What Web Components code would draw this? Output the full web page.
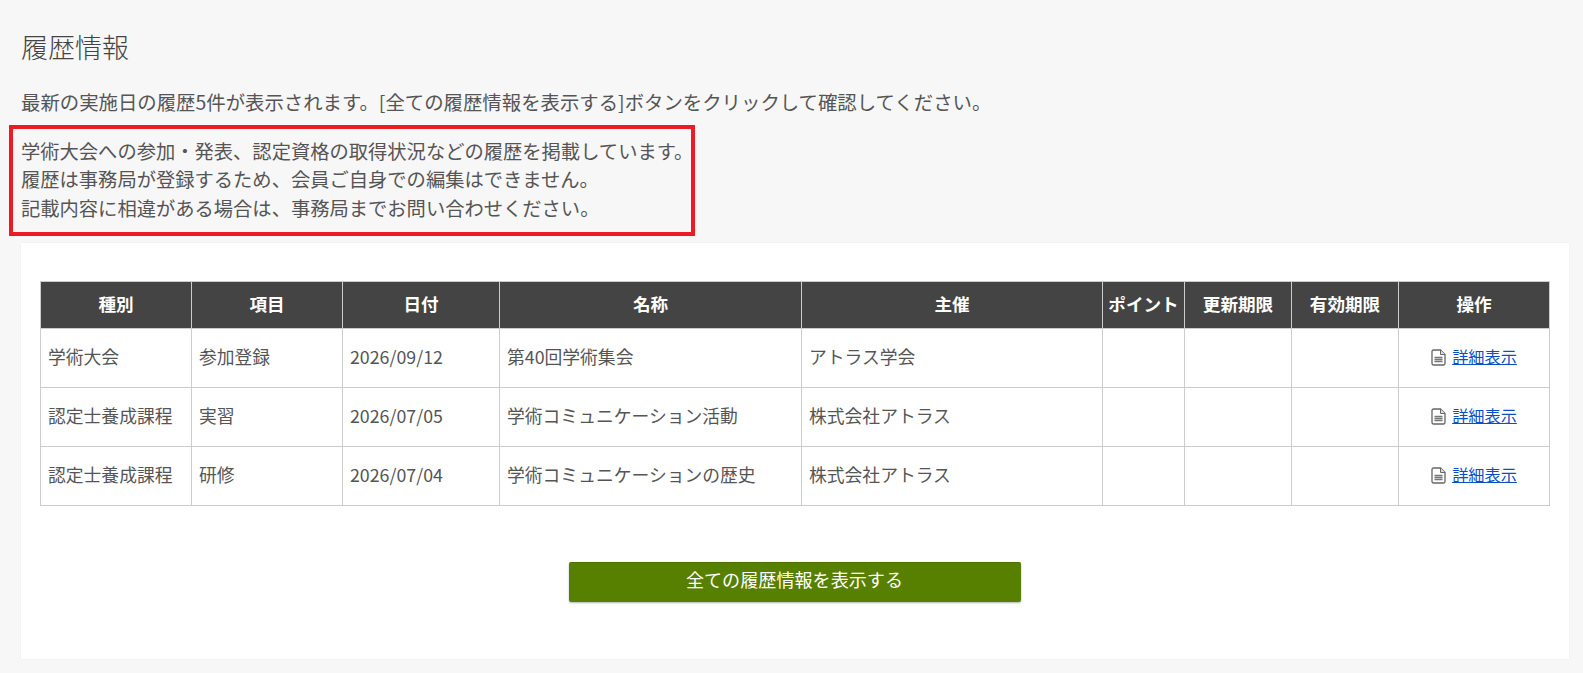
<!DOCTYPE html>
<html lang="ja">
<head>
<meta charset="utf-8">
<title>履歴情報</title>
<style>
  html, body { margin: 0; background: #f7f7f7; }
  body { font-family: "Noto Sans CJK JP", sans-serif; color: #555; overflow: hidden; }
</style>
</head>
<body>
<history-page>
  <span slot="title">履歴情報</span>
  <span slot="lead">最新の実施日の履歴5件が表示されます。[全ての履歴情報を表示する]ボタンをクリックして確認してください。</span>
  <note-box>
    <div>学術大会への参加・発表、認定資格の取得状況などの履歴を掲載しています。</div>
    <div>履歴は事務局が登録するため、会員ご自身での編集はできません。</div>
    <div>記載内容に相違がある場合は、事務局までお問い合わせください。</div>
  </note-box>
  <history-card>
    <history-table></history-table>
    <green-button>全ての履歴情報を表示する</green-button>
  </history-card>
</history-page>
<script>
class HistoryPage extends HTMLElement {
  constructor() {
    super();
    this.attachShadow({ mode: 'open' }).innerHTML = `
      <style>
        :host { display: block; padding: 27px 14px 14px 21px; }
        h1 { margin: 0; font-size: 27px; font-weight: 300; line-height: 40px; color: #444; }
        p { margin: 21px 0 0; font-size: 19.4px; line-height: 28px; font-weight: 400; white-space: nowrap; }
      </style>
      <h1><slot name="title"></slot></h1>
      <p><slot name="lead"></slot></p>
      <slot></slot>`;
  }
}

class NoteBox extends HTMLElement {
  constructor() {
    super();
    this.attachShadow({ mode: 'open' }).innerHTML = `
      <style>
        :host {
          display: block; box-sizing: border-box; width: 686px; height: 111px;
          margin: 9px 0 7px -12px; padding: 8px 7px 0 8px;
          border: 4px solid #ed1c24; font-size: 19.3px; line-height: 28.3px; font-weight: 400;
          white-space: nowrap;
        }
      </style>
      <slot></slot>`;
  }
}

class HistoryCard extends HTMLElement {
  constructor() {
    super();
    this.attachShadow({ mode: 'open' }).innerHTML = `
      <style>
        :host { display: block; background: #fff; padding: 38px 20px 57px 19px; box-shadow: 0 0 2px rgba(0,0,0,.05); }
      </style>
      <slot></slot>`;
  }
}

const rows = [
  ['学術大会', '参加登録', '2026/09/12', '第40回学術集会', 'アトラス学会'],
  ['認定士養成課程', '実習', '2026/07/05', '学術コミュニケーション活動', '株式会社アトラス'],
  ['認定士養成課程', '研修', '2026/07/04', '学術コミュニケーションの歴史', '株式会社アトラス']
];
const docIcon = `<svg width="15" height="17" viewBox="0 0 15 17" aria-hidden="true">
  <path d="M1 2.500a1.500 1.500 0 0 1 1.500-1.500h7l4.500 4.500v9a1.500 1.500 0 0 1-1.500 1.500h-10a1.500 1.500 0 0 1-1.500-1.500z" fill="#fff" stroke="#666" stroke-width="1.300"/>
  <path d="M9.500 1v4.500h4.500" fill="#ddd" stroke="#666" stroke-width="1"/>
  <path d="M3.500 8.500h8M3.500 10.500h8M3.500 12.500h8" stroke="#777" stroke-width="1.300"/>
</svg>`;

class HistoryTable extends HTMLElement {
  constructor() {
    super();
    const heads = ['種別', '項目', '日付', '名称', '主催', 'ポイント', '更新期限', '有効期限', '操作'];
    const widths = [151, 151, 157, 302, 301, 82, 107, 107, 151];
    this.attachShadow({ mode: 'open' }).innerHTML = `
      <style>
        :host { display: block; }
        table { border-collapse: collapse; table-layout: fixed; width: 1509px; font-size: 17.8px; font-weight: 400; }
        th, td { border: 1px solid #ccc; padding: 0 7px 5px; white-space: nowrap; overflow: visible; }
        th { background: #444; color: #fff; height: 47px; font-weight: 700; font-size: 17.6px; padding: 0 0 3px; box-sizing: border-box; }
        td { height: 59px; box-sizing: border-box; }
        td.op { text-align: center; padding: 0 0 7px; }
        a { color: #0b4fc8; font-size: 16.2px; text-decoration: underline; }
        svg { vertical-align: -3px; margin-right: 6px; }
      </style>
      <table>
        <colgroup>${widths.map(w => `<col style="width:${w}px">`).join('')}</colgroup>
        <tr>${heads.map(h => `<th>${h}</th>`).join('')}</tr>
        ${rows.map(r => `<tr>${r.map(c => `<td>${c}</td>`).join('')}<td></td><td></td><td></td>
          <td class="op">${docIcon}<a href="#">詳細表示</a></td></tr>`).join('')}
      </table>`;
  }
}

class GreenButton extends HTMLElement {
  constructor() {
    super();
    this.attachShadow({ mode: 'open' }).innerHTML = `
      <style>
        :host { display: block; width: 452px; margin: 56px auto 0; }
        button {
          display: block; width: 100%; height: 40px; padding: 0 0 7px; border: 0; border-top: 1px solid #4d7000; border-radius: 2px;
          background: #588000; color: #fff; font: 400 18.1px "Noto Sans CJK JP", sans-serif;
          box-shadow: 0 1px 2px rgba(0,0,0,.3);
        }
      </style>
      <button><slot></slot></button>`;
  }
}

customElements.define('history-page', HistoryPage);
customElements.define('note-box', NoteBox);
customElements.define('history-card', HistoryCard);
customElements.define('history-table', HistoryTable);
customElements.define('green-button', GreenButton);
</script>
</body>
</html>
